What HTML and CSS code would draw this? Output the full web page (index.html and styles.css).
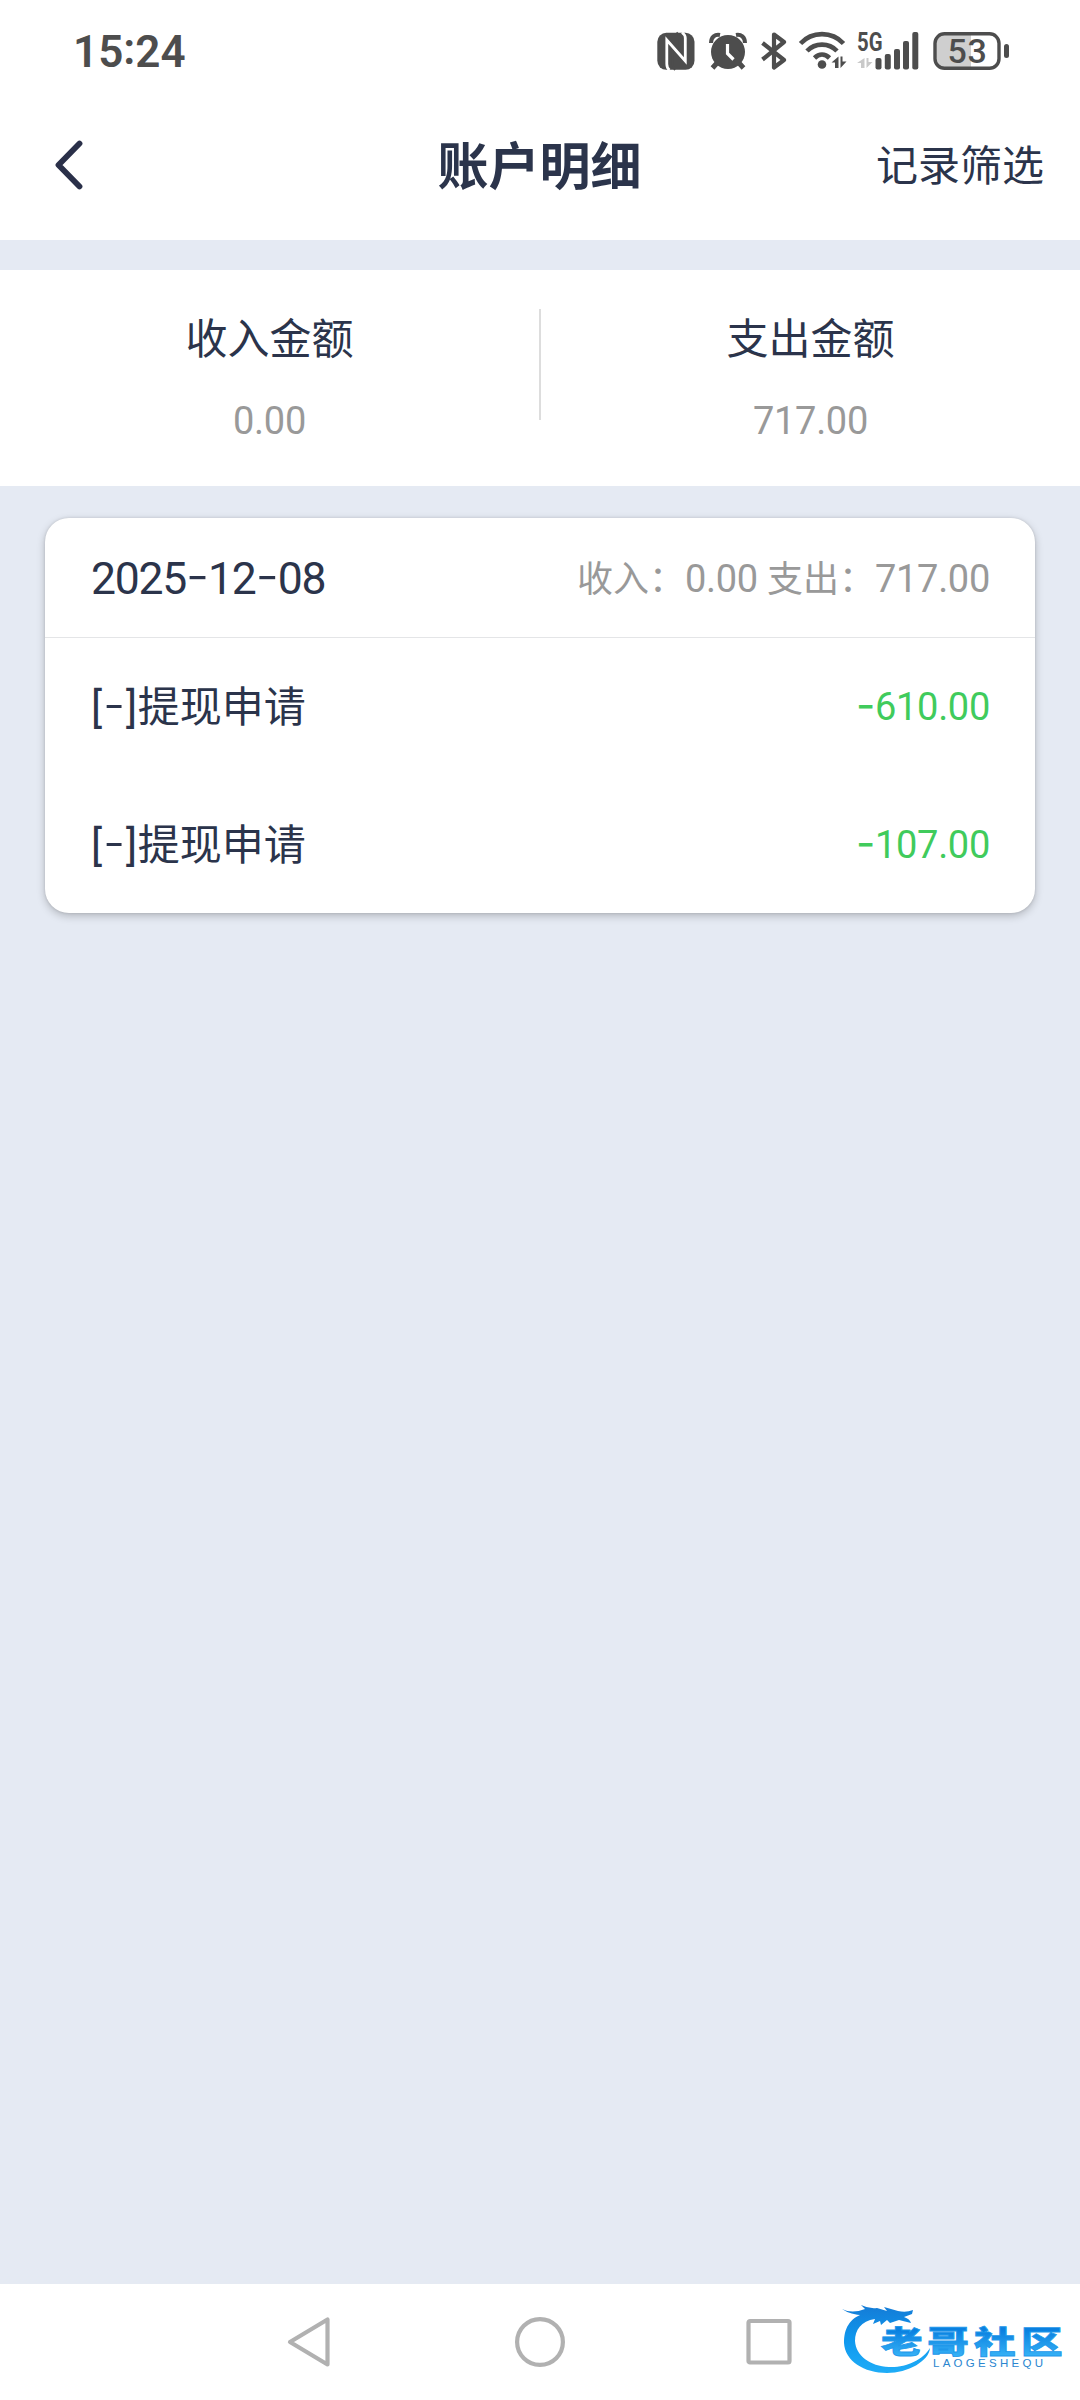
FILE: index.html
```html
<!DOCTYPE html>
<html lang="zh-CN">
<head>
<meta charset="utf-8">
<title>账户明细</title>
<link rel="stylesheet" href="styles.css">
</head>
<body>
<div class="screen">
  <div class="status">
    <div class="clock">15<span class="colon">:</span>24</div>
    <div class="indicators">
      <svg class="nfc" width="38" height="38" viewBox="0 0 38 38">
        <rect x=".3" y=".8" width="37.200" height="37" rx="9" fill="#4d4d4d"/>
        <path d="M12.500 38Q9.800 36 9.800 32V8L28.300 29V6Q28.300 3 25 .5" fill="none" stroke="#fff" stroke-width="2.800"/>
        <path d="M15.500 18V31.500Q15.500 35 18 38M22.500 17.500V7Q22.500 3 19.500 .5" fill="none" stroke="#4d4d4d" stroke-width="2"/>
      </svg>
      <svg class="alarm" width="38" height="38" viewBox="0 0 38 38">
        <circle cx="19" cy="20" r="17" fill="#4d4d4d"/>
        <path d="M2 11C2 5 6 2 11 3M36 11C36 5 32 2 27 3" fill="none" stroke="#4d4d4d" stroke-width="4"/>
        <path d="M8 31L3.500 36M30 31L34.500 36" stroke="#4d4d4d" stroke-width="5"/>
        <path d="M18.500 12V21.500L24.500 27.500" fill="none" stroke="#fff" stroke-width="3.200"/>
      </svg>
      <svg class="bluetooth" width="26" height="38" viewBox="0 0 26 38">
        <path d="M1.500 11L23 28L13 35.500V2.500L23 10L1.500 27.500" fill="none" stroke="#4d4d4d" stroke-width="4.200" stroke-linejoin="round"/>
      </svg>
      <svg class="wifi" width="50" height="38" viewBox="0 0 50 38">
        <path d="M1.500 11.500C13 -1 33 -1 44.500 11.500M8 19C16 10.500 30 10.500 38 19M15.500 26C20 21.500 26 21.500 30.500 26" fill="none" stroke="#4d4d4d" stroke-width="4.600"/>
        <circle cx="23" cy="32.500" r="4.300" fill="#4d4d4d"/>
        <path d="M39.500 24.500V36H36V30.500H32.500ZM41.500 36V24.500H43.500V29.500H47.500Z" fill="#4d4d4d"/>
      </svg>
      <svg class="signal" width="64" height="38" viewBox="0 0 64 38">
        <text x="0" y="18.500" textLength="25.500" lengthAdjust="spacingAndGlyphs" class="network">5G</text>
        <path d="M7.500 26V36H4V31H0ZM9.500 36V26H11.500V30H15.500Z" fill="#c9c9c9"/>
        <g fill="#4d4d4d">
          <rect x="18.500" y="26" width="6" height="11.500" rx="2"/>
          <rect x="27.800" y="22" width="6" height="15.500" rx="2"/>
          <rect x="37" y="17" width="6" height="20.500" rx="2"/>
          <rect x="46" y="9" width="6" height="28.500" rx="2"/>
          <rect x="55.300" y="0" width="6" height="37.500" rx="2"/>
        </g>
      </svg>
      <svg class="battery" width="76" height="38" viewBox="0 0 76 38">
        <path d="M11 2H38V36H11Q2 36 2 27V11Q2 2 11 2Z" fill="#cfcfcf"/>
        <rect x="2" y="1.800" width="64" height="34.500" rx="9.500" fill="none" stroke="#4d4d4d" stroke-width="3.400"/>
        <rect x="71" y="12" width="5" height="14" rx="2.500" fill="#4d4d4d"/>
        <text x="14.500 34.500" y="31" class="level">53</text>
      </svg>
    </div>
  </div>

  <header class="header">
    <svg class="back" width="30" height="52" viewBox="0 0 30 52"><path d="M25.500 4.500L4.500 26L25.500 47.500" fill="none" stroke="#2a3049" stroke-width="5.800" stroke-linecap="round" stroke-linejoin="round"/></svg>
    <h1 class="title">账户明细</h1>
    <div class="filter">记录筛选</div>
  </header>

  <section class="summary">
    <div class="total"><div class="label">收入金额</div><div class="value">0.00</div></div>
    <div class="separator"></div>
    <div class="total"><div class="label">支出金额</div><div class="value">717.00</div></div>
  </section>

  <main class="content">
    <section class="card">
      <div class="day">
        <div class="date">2025<span class="dash">-</span>12<span class="dash">-</span>08</div>
        <div class="day-total">收入：<span class="num">0.00 </span>支出：<span class="num">717.00</span></div>
      </div>
      <div class="entry">
        <div class="name"><span class="tag">[<span class="dash">-</span>]</span>提现申请</div>
        <div class="amount"><span class="dash">-</span>610.00</div>
      </div>
      <div class="entry">
        <div class="name"><span class="tag">[<span class="dash">-</span>]</span>提现申请</div>
        <div class="amount"><span class="dash">-</span>107.00</div>
      </div>
    </section>
  </main>

  <nav class="nav">
    <svg width="46" height="52" viewBox="0 0 46 52"><path d="M42.500 3.500V48.500L5 26Z" fill="none" stroke="#b1b1b1" stroke-width="4.200" stroke-linejoin="round"/></svg>
    <svg width="52" height="52" viewBox="0 0 52 52"><circle cx="27" cy="26" r="22.900" fill="none" stroke="#b1b1b1" stroke-width="4.200"/></svg>
    <svg width="46" height="52" viewBox="0 0 46 52"><rect x="2.500" y="5" width="41" height="41.500" rx="1.500" fill="none" stroke="#b1b1b1" stroke-width="4.200"/></svg>
    <svg class="brand" width="240" height="84" viewBox="0 0 240 84">
      <defs>
        <linearGradient id="word" x1="0" y1="0" x2="0" y2="1"><stop offset=".3" stop-color="#0a80e0"/><stop offset=".85" stop-color="#35b0f5"/></linearGradient>
        <linearGradient id="tail" gradientUnits="userSpaceOnUse" x1="0" y1="5" x2="0" y2="75"><stop offset="0" stop-color="#147bd6"/><stop offset=".5" stop-color="#0f98ee"/><stop offset="1" stop-color="#20aef8"/></linearGradient>
      </defs>
      <path d="M25 13C9 18 4 29 4 43C5 61 24 73 47 73C68 73 89 61 90 48C83 60 65 68 49 67C30 66 16 56 15 41C15 30 21 21 35 19Z" fill="url(#tail)"/>
      <path d="M2 9Q12 14 25 9L21 5Q29 9 37 8L47 11L44 7L58 11Q66 13 73 10L72 14L64 17Q70 19 71 23L59 20L50 23L47 20L41 25L40 21L33 24L35 19L26 19L27 15Q12 16 2 9Z" fill="url(#tail)"/>
      <text transform="translate(41 53) scale(1.340 1)" x="0 34.500 69.500 104.500" y="0" class="brand-name">老哥社区</text>
      <text x="93" y="67" textLength="110" class="brand-latin">LAOGESHEQU</text>
    </svg>
  </nav>
</div>
</body>
</html>
```
FILE: styles.css
```css
body {
  margin: 0;
  font-family: Roboto, "Noto Sans CJK SC", sans-serif;
  color: #2b344b;
}

svg {
  display: block;
  flex: none;
  overflow: visible;
}

.screen {
  display: flex;
  flex-direction: column;
  width: 1080px;
  height: 2400px;
  background: #e5eaf3;
}

.status {
  display: flex;
  justify-content: space-between;
  align-items: center;
  box-sizing: border-box;
  height: 102px;
  padding: 0 71px 0 73px;
  background: #fff;
}

.clock {
  padding-top: 1px;
  color: #4d4d4d;
  font-size: 44px;
  font-weight: 600;
  line-height: 60px;
  white-space: nowrap;
}

.colon {
  position: relative;
  top: -3px;
}

.indicators {
  display: flex;
  align-items: center;
}

.nfc { margin-left: -1px; }
.alarm { margin-left: 14px; }
.bluetooth { margin-left: 14px; }
.wifi { margin-left: 12px; }
.signal { margin-left: 8px; }
.battery { margin-left: 12px; }

.network {
  font-size: 26px;
  font-weight: 700;
  fill: #4d4d4d;
}

.level {
  font-size: 34px;
  font-weight: 500;
  fill: #4d4d4d;
}

.header {
  display: grid;
  grid-template-columns: 1fr auto 1fr;
  align-items: center;
  box-sizing: border-box;
  height: 138px;
  padding: 0 36px 12px 54px;
  background: #fff;
}

.title {
  margin: 0 0 0 -19px;
  font-size: 51px;
  font-weight: 700;
  line-height: 70px;
  padding-top: 6px;
}

.filter {
  padding-top: 4px;
  font-size: 42px;
  line-height: 60px;
  text-align: right;
}

.summary {
  display: flex;
  height: 216px;
  margin-top: 30px;
  background: #fff;
}

.total {
  flex: 1;
  padding-top: 40px;
  text-align: center;
}

.label {
  font-size: 42px;
  line-height: 60px;
}

.value {
  margin-top: 21px;
  color: #999;
  font-size: 38px;
  letter-spacing: -.3px;
  line-height: 60px;
}

.separator {
  width: 2px;
  height: 111px;
  margin-top: 39px;
  background: #ddd;
}

.content {
  flex: 1;
  padding: 32px 45px 0;
}

.card {
  height: 395px;
  border-radius: 24px;
  background: #fff;
  box-shadow: 0 3px 8px rgba(0, 0, 0, .22), 0 0 3px rgba(0, 0, 0, .12);
}

.day,
.entry {
  display: flex;
  justify-content: space-between;
  align-items: center;
  box-sizing: border-box;
  padding: 0 45px 0 46px;
}

.day {
  height: 120px;
  border-bottom: 1px solid #e4e5e7;
}

.entry {
  height: 138px;
}

.date {
  font-size: 44.500px;
  letter-spacing: -1.300px;
  line-height: 60px;
}

.dash {
  font-family: Inter, sans-serif;
  font-weight: 300;
}

.date .dash {
  font-size: 52px;
}

.day-total {
  padding-top: 3px;
  color: #999;
  font-size: 36px;
  line-height: 60px;
  white-space: pre;
}

.num {
  font-size: 38px;
  letter-spacing: -.3px;
}

.name {
  padding-top: 2px;
  font-size: 42px;
  line-height: 60px;
}

.tag {
  letter-spacing: .8px;
}

.tag .dash {
  font-size: 49px;
  line-height: 1;
}

.amount {
  color: #40cb5c;
  font-size: 38px;
  letter-spacing: -.3px;
  line-height: 60px;
}

.amount .dash {
  font-size: 42px;
  font-weight: 400;
  line-height: 1;
}

.nav {
  position: relative;
  display: flex;
  justify-content: space-between;
  box-sizing: border-box;
  height: 116px;
  padding: 32px 288px 0 285px;
  background: #fff;
}

.brand {
  position: absolute;
  top: 16px;
  left: 840px;
}

.brand-name {
  font-family: "Noto Sans CJK SC", sans-serif;
  font-size: 31px;
  font-weight: 900;
  fill: url(#word);
  stroke: #1f98ea;
  stroke-width: .8px;
}

.brand-latin {
  font-family: "Liberation Sans", sans-serif;
  font-size: 11.500px;
  fill: #2b86cf;
}
```
